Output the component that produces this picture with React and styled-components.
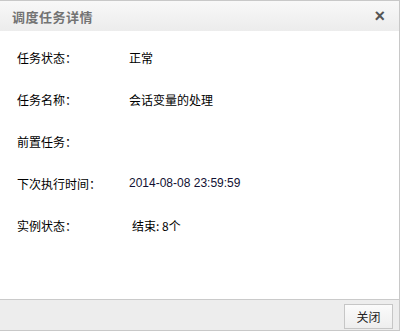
import React from "react";
import styled, { createGlobalStyle } from "styled-components";

const GlobalStyle = createGlobalStyle`
  html, body {
    margin: 0;
    padding: 0;
    background: #fff;
  }
  body {
    font-family: "Liberation Sans", "Noto Sans CJK SC", sans-serif;
    font-size: 12px;
    color: #000;
  }
`;

const Dialog = styled.div`
  width: 399px;
  height: 329px;
  border: 1px solid #c8c8c8;
  border-left: none;
  display: flex;
  flex-direction: column;
  background: #fff;
`;

const Header = styled.div`
  height: 30px;
  display: flex;
  align-items: center;
  justify-content: space-between;
  padding: 0 12px 0 12px;
  background: linear-gradient(#f8f8f8, #ececec);
`;

const Title = styled.span`
  font-family: "Noto Sans CJK SC", sans-serif;
  font-size: 13px;
  font-weight: bold;
  color: #737373;
  letter-spacing: 0.5px;
`;

const Close = styled.span`
  font-family: "Liberation Sans", sans-serif;
  font-size: 18px;
  font-weight: bold;
  color: #555;
  line-height: 1;
  margin-right: 2px;
`;

const Body = styled.div`
  flex: 1;
  padding: 5px 0 0 17px;
`;

const Row = styled.div`
  display: grid;
  grid-template-columns: 112px 1fr;
  height: 42px;
  align-items: center;
  font-family: "Noto Sans CJK SC", sans-serif;
  font-size: 12px;
  color: #000;
`;

const Value = styled.span`
  padding-left: ${(p) => p.$shift || 0}px;
  font-family: ${(p) => (p.$latin ? '"Liberation Sans", "Noto Sans CJK SC"' : '"Noto Sans CJK SC"')}, sans-serif;
  color: ${(p) => (p.$latin ? "#111133" : "#000")};
`;

const Footer = styled.div`
  height: 30px;
  border-top: 1px solid #cacaca;
  background: #ededed;
  display: flex;
  justify-content: flex-end;
  align-items: center;
  padding-right: 6px;
`;

const Button = styled.button`
  width: 49px;
  height: 25px;
  border: 1px solid #c6c6c6;
  background: linear-gradient(#fbfbfb, #eeeeee);
  font-family: "Noto Sans CJK SC", sans-serif;
  font-size: 12px;
  color: #222;
  padding: 0;
  margin-top: 2px;
`;

const rows = [
  { label: "任务状态：", value: "正常" },
  { label: "任务名称：", value: "会话变量的处理" },
  { label: "前置任务：", value: "" },
  { label: "下次执行时间：", value: "2014-08-08 23:59:59", latin: true },
  { label: "实例状态：", value: "结束: 8个", shift: 3 },
];

export default function App() {
  return (
    <>
      <GlobalStyle />
      <Dialog>
        <Header>
          <Title>调度任务详情</Title>
          <Close>×</Close>
        </Header>
        <Body>
          {rows.map((r) => (
            <Row key={r.label}>
              <span>{r.label}</span>
              <Value $latin={r.latin} $shift={r.shift}>
                {r.value}
              </Value>
            </Row>
          ))}
        </Body>
        <Footer>
          <Button>关闭</Button>
        </Footer>
      </Dialog>
    </>
  );
}
